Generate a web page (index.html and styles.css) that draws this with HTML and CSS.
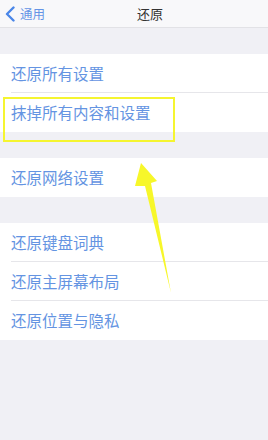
FILE: index.html
```html
<!DOCTYPE html>
<html lang="zh">
<head>
    <meta charset="UTF-8">
    <meta name="viewport" content="width=device-width, initial-scale=1.0">
    <title>还原</title>
    <link rel="stylesheet" href="styles.css">
</head>
<body>
    <div class="nav">
        <div class="back">
            <svg class="chevron" width="10" height="16" viewBox="0 0 10 16">
                <path d="M8.5 1.5 L2 8 L8.5 14.5" fill="none" stroke="#4a86e8" stroke-width="2.4" stroke-linecap="round" stroke-linejoin="round"/>
            </svg>
            <span>通用</span>
        </div>
        <div class="title">还原</div>
    </div>

    <div class="group">
        <div class="row">还原所有设置</div>
        <div class="row">抹掉所有内容和设置</div>
    </div>

    <div class="group">
        <div class="row">还原网络设置</div>
    </div>

    <div class="group">
        <div class="row">还原键盘词典</div>
        <div class="row">还原主屏幕布局</div>
        <div class="row">还原位置与隐私</div>
    </div>

    <!-- annotation drawn over the screenshot -->
    <div class="highlight"></div>
    <svg class="arrow" width="268" height="440" viewBox="0 0 268 440">
        <polygon points="141,163 157,181 151,183 171,293 145,186 135,186" fill="#f7f72a"/>
    </svg>
</body>
</html>
```

FILE: styles.css
```css
body {
    margin: 0;
    padding: 0;
    background-color: #f0f0f5;
    font-family: "Noto Sans CJK SC", "Noto Sans", sans-serif;
    width: 268px;
    height: 440px;
    position: relative;
    overflow: hidden;
}

.nav {
    height: 28px;
    background-color: #f8f8fa;
    border-bottom: 1px solid #e2e2e6;
    box-sizing: border-box;
    display: flex;
    align-items: center;
}

.back {
    display: flex;
    align-items: center;
    padding-left: 5px;
    color: #6494e6;
    font-size: 12.5px;
}

.chevron {
    margin-right: 5px;
}

.title {
    margin-left: 92px;
    font-size: 13px;
    color: #333;
}

.group {
    margin-top: 26px;
    background-color: #fff;
    padding-left: 11px;
}

.row {
    height: 39px;
    line-height: 39px;
    font-size: 15.5px;
    color: #6494e2;
    border-bottom: 1px solid #e6e6ea;
    box-sizing: border-box;
}

.row:last-child {
    border-bottom: none;
}

.highlight {
    position: absolute;
    left: 3px;
    top: 97px;
    width: 172px;
    height: 45px;
    border: 2px solid #f5f530;
    box-sizing: border-box;
}

.arrow {
    position: absolute;
    left: 0;
    top: 0;
}
```
